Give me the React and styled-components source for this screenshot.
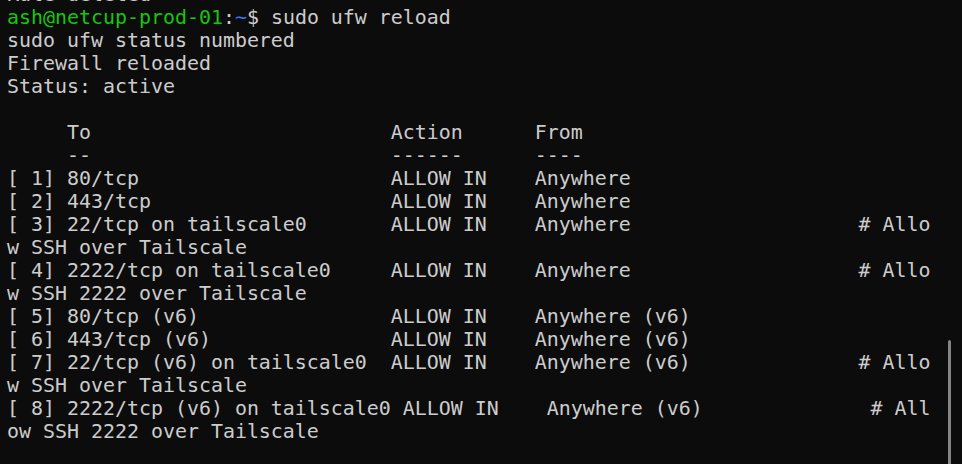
import styled, { createGlobalStyle } from 'styled-components'

const Global = createGlobalStyle`
html, body {
  margin: 0;
  padding: 0;
  background: #0c0c0c;
}
`

const Window = styled.div`
display: flex;
width: 962px;
height: 464px;
overflow: hidden;
background-color: #0c0c0c;
`

const Screen = styled.div`
flex: 1;
padding-left: 7px;
margin-top: -17px;
font-family: "DejaVu Sans Mono", "Liberation Mono", monospace;
font-size: 19.93px;
line-height: 23px;
color: #cccccc;
`

const Line = styled.div`
white-space: pre;
height: 23px;
`

const Prompt = styled.span`
color: ${p => p.$blue ? '#3b78ff' : '#16c60c'};
`

const ScrollTrack = styled.div`
width: 14px;
display: flex;
padding-left: 4px;
`

const Thumb = styled.div`
width: 3px;
margin-top: 340px;
height: 130px;
background-color: #858585;
border-radius: 2px;
`

const lines = [
  'Rule deleted',
  null,
  'sudo ufw status numbered',
  'Firewall reloaded',
  'Status: active',
  '',
  '     To                         Action      From',
  '     --                         ------      ----',
  '[ 1] 80/tcp                     ALLOW IN    Anywhere',
  '[ 2] 443/tcp                    ALLOW IN    Anywhere',
  '[ 3] 22/tcp on tailscale0       ALLOW IN    Anywhere                   # Allo',
  'w SSH over Tailscale',
  '[ 4] 2222/tcp on tailscale0     ALLOW IN    Anywhere                   # Allo',
  'w SSH 2222 over Tailscale',
  '[ 5] 80/tcp (v6)                ALLOW IN    Anywhere (v6)',
  '[ 6] 443/tcp (v6)               ALLOW IN    Anywhere (v6)',
  '[ 7] 22/tcp (v6) on tailscale0  ALLOW IN    Anywhere (v6)              # Allo',
  'w SSH over Tailscale',
  '[ 8] 2222/tcp (v6) on tailscale0 ALLOW IN    Anywhere (v6)              # All',
  'ow SSH 2222 over Tailscale',
  '',
]

export default function App() {
  return (
    <Window>
      <Global />
      <Screen>
        {lines.map((text, i) =>
          text === null ? (
            <Line key={i}>
              <Prompt>ash@netcup-prod-01</Prompt>:<Prompt $blue>~</Prompt>$ sudo ufw reload
            </Line>
          ) : (
            <Line key={i}>{text}</Line>
          )
        )}
      </Screen>
      <ScrollTrack>
        <Thumb />
      </ScrollTrack>
    </Window>
  )
}
